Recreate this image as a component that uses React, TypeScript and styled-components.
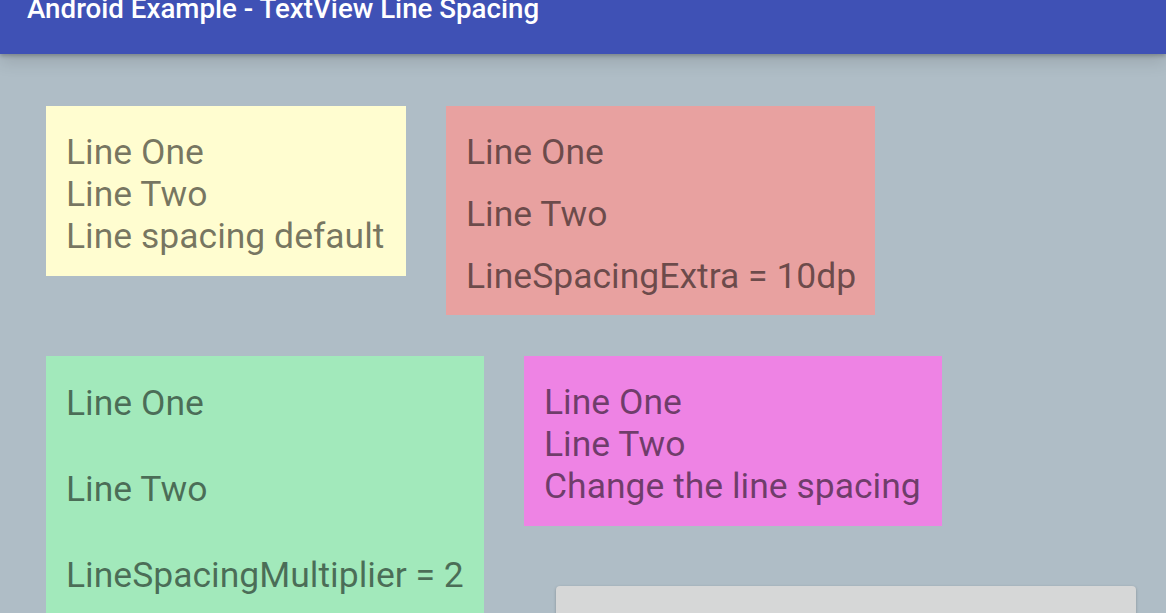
import styled, { createGlobalStyle } from "styled-components";

const GlobalStyle = createGlobalStyle`
html, body {
    margin: 0;
    padding: 0;
    overflow: hidden;
}
body {
    background: #afbdc6;
    font-family: Roboto, "Liberation Sans", sans-serif;
}
`;

const Screen = styled.div`
width: 1166px;
height: 613px;
overflow: hidden;
background: #afbdc6;
`;

const AppBar = styled.header`
position: relative;
z-index: 1;
height: 54px;
background: #3f51b5;
padding-left: 27px;
box-shadow: 0 2px 4px rgba(0, 0, 0, 0.22), 0 8px 16px rgba(0, 0, 0, 0.12);
overflow: hidden;
`;

const Title = styled.h1`
margin: -5px 0 0;
font-size: 27.7px;
line-height: 27.7px;
font-weight: 500;
color: #ffffff;
`;

const Content = styled.main`
padding: 52px 0 0 46px;
display: flex;
flex-direction: column;
gap: 41px;
`;

const Row = styled.div`
display: flex;
align-items: flex-start;
gap: 40px;
`;

const Column = styled.div`
display: flex;
flex-direction: column;
align-items: flex-start;
gap: 60px;
`;

// $lh = line height, $pt/$pb = vertical padding of the TextView
const Note = styled.div<{ $bg: string; $w: number; $pt: number; $pb: number; $lh: number }>`
box-sizing: border-box;
width: ${(p) => p.$w}px;
padding: ${(p) => p.$pt}px 20px ${(p) => p.$pb}px 20px;
background: ${(p) => p.$bg};
color: rgba(0, 0, 0, 0.54);
font-size: 35.5px;
line-height: ${(p) => p.$lh}px;
white-space: nowrap;
`;

const Line = styled.div``;

const Button = styled.button`
margin-left: 32px;
width: 580px;
height: 76px;
border: none;
border-radius: 4px;
background: #d6d7d7;
box-shadow: 0 1px 3px rgba(0, 0, 0, 0.25);
font-family: Roboto, "Liberation Sans", sans-serif;
font-size: 30px;
font-weight: 500;
letter-spacing: 1px;
color: rgba(0, 0, 0, 0.87);
`;

function App() {
    return (
        <Screen>
            <GlobalStyle />
            <AppBar>
                <Title>Android Example - TextView Line Spacing</Title>
            </AppBar>
            <Content>
                <Row>
                    <Note $bg="#fffdd0" $w={360} $pt={25} $pb={19} $lh={42}>
                        <Line>Line One</Line>
                        <Line>Line Two</Line>
                        <Line>Line spacing default</Line>
                    </Note>
                    <Note $bg="#e8a1a0" $w={429} $pt={15} $pb={8} $lh={62}>
                        <Line>Line One</Line>
                        <Line>Line Two</Line>
                        <Line>LineSpacingExtra = 10dp</Line>
                    </Note>
                </Row>
                <Row>
                    <Note $bg="#a2e9bb" $w={438} $pt={4} $pb={0} $lh={86}>
                        <Line>Line One</Line>
                        <Line>Line Two</Line>
                        <Line>LineSpacingMultiplier = 2</Line>
                    </Note>
                    <Column>
                        <Note $bg="#ee83e4" $w={418} $pt={25} $pb={19} $lh={42}>
                            <Line>Line One</Line>
                            <Line>Line Two</Line>
                            <Line>Change the line spacing</Line>
                        </Note>
                        <Button>CHANGE LINE SPACING</Button>
                    </Column>
                </Row>
            </Content>
        </Screen>
    );
}

export default App;
